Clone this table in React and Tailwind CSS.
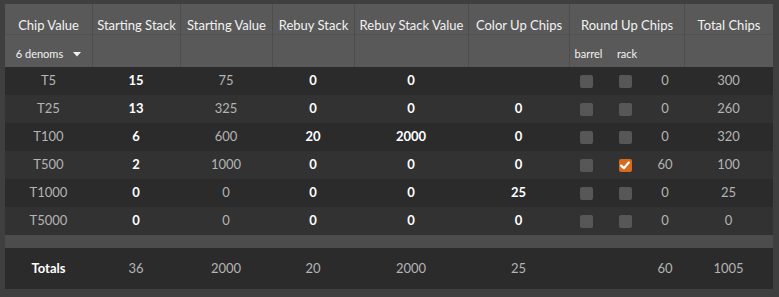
import React from "react";

const cols = "grid grid-cols-[87px_88px_92px_82px_114px_101px_115px_89px]";

const rows = [
  { chip: "T5", start: 15, startVal: 75, rebuy: 0, rebuyVal: 0, colorUp: "", barrel: false, rack: false, round: 0, total: 300 },
  { chip: "T25", start: 13, startVal: 325, rebuy: 0, rebuyVal: 0, colorUp: 0, barrel: false, rack: false, round: 0, total: 260 },
  { chip: "T100", start: 6, startVal: 600, rebuy: 20, rebuyVal: 2000, colorUp: 0, barrel: false, rack: false, round: 0, total: 320 },
  { chip: "T500", start: 2, startVal: 1000, rebuy: 0, rebuyVal: 0, colorUp: 0, barrel: false, rack: true, round: 60, total: 100 },
  { chip: "T1000", start: 0, startVal: 0, rebuy: 0, rebuyVal: 0, colorUp: 25, barrel: false, rack: false, round: 0, total: 25 },
  { chip: "T5000", start: 0, startVal: 0, rebuy: 0, rebuyVal: 0, colorUp: 0, barrel: false, rack: false, round: 0, total: 0 },
];

const Check = ({ checked }) =>
  checked ? (
    <span className="w-[13px] h-[13px] rounded-[2px] bg-[#d86a1e] flex items-center justify-center">
      <svg width="10" height="9" viewBox="0 0 10 9">
        <path d="M1.2 4.6 L3.8 7.2 L8.8 1.6" fill="none" stroke="#fff" strokeWidth="2.2" strokeLinecap="round" strokeLinejoin="round" />
      </svg>
    </span>
  ) : (
    <span className="w-[13px] h-[13px] rounded-[2px] bg-[#575757]" />
  );

const HeadCell = ({ children, first }) => (
  <div className={`flex justify-center ${first ? "" : "border-l border-[#4d4d4d]"}`}>{children}</div>
);

export default function App() {
  return (
    <div className="w-[779px] h-[297px] bg-[#3f3f3f] pt-[4px] pl-[5px] font-['Lato',sans-serif] text-[13px]">
      <div className="w-[768px]">
        {/* header */}
        <div className="bg-[#595959] text-[#f2f2f2]">
          <div className={`${cols} h-[31px] border-b border-[#525252] leading-[20px]`}>
            <HeadCell first><span className="pt-[11px]">Chip Value</span></HeadCell>
            <HeadCell><span className="pt-[11px]">Starting Stack</span></HeadCell>
            <HeadCell><span className="pt-[11px]">Starting Value</span></HeadCell>
            <HeadCell><span className="pt-[11px]">Rebuy Stack</span></HeadCell>
            <HeadCell><span className="pt-[11px]">Rebuy Stack Value</span></HeadCell>
            <HeadCell><span className="pt-[11px]">Color Up Chips</span></HeadCell>
            <HeadCell><span className="pt-[11px]">Round Up Chips</span></HeadCell>
            <HeadCell><span className="pt-[11px]">Total Chips</span></HeadCell>
          </div>
          <div className={`${cols} h-[32px] text-[11px] leading-[16px]`}>
            <div className="flex items-center justify-center gap-[10px] pt-[6px]">
              <span>6 denoms</span>
              <svg width="8" height="5" viewBox="0 0 8 5">
                <path d="M0 0 L8 0 L4 4.5 Z" fill="#f2f2f2" />
              </svg>
            </div>
            <HeadCell />
            <HeadCell />
            <HeadCell />
            <HeadCell />
            <HeadCell />
            <div className="border-l border-[#4d4d4d] grid grid-cols-[37px_40px_38px] items-center pt-[6px]">
              <span className="text-center">barrel</span>
              <span className="text-center">rack</span>
              <span />
            </div>
            <HeadCell />
          </div>
        </div>

        {/* body */}
        {rows.map((r, i) => (
          <div key={r.chip} className={`${cols} h-[28px] items-center text-center ${i % 2 === 0 ? "bg-[#2b2b2b]" : "bg-[#323232]"}`}>
            <span className="text-[#b4b4b4]">{r.chip}</span>
            <span className="text-white font-bold">{r.start}</span>
            <span className="text-[#b4b4b4]">{r.startVal}</span>
            <span className="text-white font-bold">{r.rebuy}</span>
            <span className="text-white font-bold">{r.rebuyVal}</span>
            <span className="text-white font-bold">{r.colorUp}</span>
            <div className="grid grid-cols-[35px_42px_38px] items-center">
              <span className="flex justify-center"><Check checked={r.barrel} /></span>
              <span className="flex justify-center"><Check checked={r.rack} /></span>
              <span className="text-[#b4b4b4]">{r.round}</span>
            </div>
            <span className="text-[#b4b4b4]">{r.total}</span>
          </div>
        ))}

        <div className="h-[13px] bg-[#4c4c4c]" />

        {/* totals */}
        <div className={`${cols} h-[41px] items-center text-center bg-[#2b2b2b] text-[#b4b4b4]`}>
          <span className="text-white font-bold">Totals</span>
          <span>36</span>
          <span>2000</span>
          <span>20</span>
          <span>2000</span>
          <span>25</span>
          <div className="grid grid-cols-[35px_42px_38px]">
            <span />
            <span />
            <span>60</span>
          </div>
          <span>1005</span>
        </div>
      </div>
    </div>
  );
}
